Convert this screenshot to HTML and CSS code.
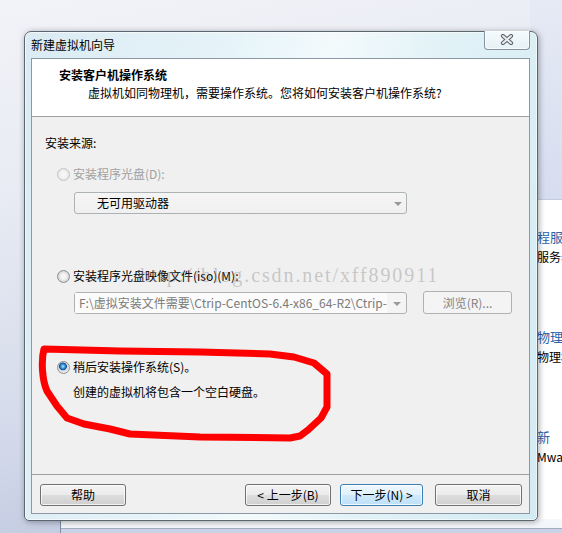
FILE: index.html
```html
<!DOCTYPE html>
<html>
<head>
<meta charset="utf-8">
<title>新建虚拟机向导</title>
<link rel="stylesheet" href="styles.css">
</head>
<body>
<div class="desktop">
  <div class="bgwin">
    <div class="bgwin-top"></div>
    <div class="bgwin-body">
      <div class="grp"><div class="bh">程服务器</div><div class="bt">服务器</div></div>
      <div class="grp"><div class="bh">物理机</div><div class="bt">物理机</div></div>
      <div class="grp"><div class="bh">新</div><div class="bt">Mware</div></div>
    </div>
  </div>
  <div class="bgwin2"></div>

  <div class="dialog">
    <div class="titlebar">
      <span class="title">新建虚拟机向导</span>
      <div class="close">
        <svg width="14" height="11" viewBox="0 0 14 11">
          <path d="M3 2 L11 9 M11 2 L3 9" stroke="#5d6670" stroke-width="4.2" stroke-linecap="round" fill="none"/>
          <path d="M3 2 L11 9 M11 2 L3 9" stroke="#e9ecef" stroke-width="2" stroke-linecap="round" fill="none"/>
        </svg>
      </div>
    </div>
    <div class="client">
      <div class="header">
        <div class="h-title">安装客户机操作系统</div>
        <div class="h-sub">虚拟机如同物理机，需要操作系统。您将如何安装客户机操作系统?</div>
      </div>
      <div class="body">
        <div class="section-label">安装来源:</div>
        <div class="option opt1 disabled"><span class="radio"></span><span>安装程序光盘(D):</span></div>
        <div class="combo"><span class="combo-text">无可用驱动器</span><span class="arrow"></span></div>
        <div class="option opt2"><span class="radio"></span><span>安装程序光盘映像文件(iso)(M):</span></div>
        <div class="row">
          <div class="combo edit"><span class="edit-text">F:\虚拟安装文件需要\Ctrip-CentOS-6.4-x86_64-R2\Ctrip-CentOS-6.4-x86_64-R2.iso</span><span class="arrow"></span></div>
          <div class="btn browse disabled">浏览(R)...</div>
        </div>
        <div class="option opt3"><span class="radio checked"></span><span>稍后安装操作系统(S)。</span></div>
        <div class="desc">创建的虚拟机将包含一个空白硬盘。</div>
      </div>
      <div class="footer">
        <div class="btn help">帮助</div>
        <div class="spacer"></div>
        <div class="btn back">&lt; 上一步(B)</div>
        <div class="btn next default">下一步(N) &gt;</div>
        <div class="btn cancel">取消</div>
      </div>
    </div>
  </div>

  <div class="watermark">http://blog.csdn.net/xff890911</div>

  <svg class="annotation" width="562" height="533" viewBox="0 0 562 533">
    <path d="M44 349 C41 360 42 380 47 391 L57 406 L67 418 L84 424 L110 429 L130 434 L200 437 L290 438 L300 436 L308 430 L321 418 L327 407 L327 374 L314 363 L294 357 L270 354 L200 352 L120 351 L44 349 Z"
      fill="none" stroke="#ff0000" stroke-width="7" stroke-linejoin="round"/>
  </svg>
</div>
</body>
</html>
```
FILE: styles.css
```css
* { box-sizing: border-box; }
html, body { margin: 0; padding: 0; }
body {
  width: 562px;
  height: 533px;
  overflow: hidden;
  font-family: "Noto Sans CJK SC", "Noto Sans", sans-serif;
  font-size: 12px;
  line-height: 16px;
  color: #000;
}
.desktop {
  position: relative;
  width: 562px;
  height: 533px;
  overflow: hidden;
  background: linear-gradient(168deg, #f2f3f8 0%, #e8ebf3 30%, #d5dbeb 65%, #b6c0dc 100%);
}

/* background window at the right */
.bgwin {
  position: absolute;
  left: 530px;
  top: 0;
  width: 40px;
  height: 521px;
  background: #fff;
  overflow: hidden;
}
.bgwin-top {
  height: 200px;
  background: linear-gradient(180deg, #e6eaf5 0%, #d6ddef 100%);
  border-bottom: 1px solid #c3cbe0;
}
.bgwin-body { padding: 27px 0 0 7px; white-space: nowrap; }
.grp { height: 100px; }
.bh { color: #2a62a8; font-size: 13px; line-height: 20px; }
.bt { color: #000; font-size: 12px; line-height: 20px; }

.bgwin2 {
  position: absolute;
  left: 60px;
  top: 519px;
  width: 502px;
  height: 14px;
  border-left: 1px solid #7f8da6;
  background: linear-gradient(180deg, #f6f8fb 0, #f3f6fa 9px, #a3acbc 9px, #a3acbc 10px, #c9d2e6 10px);
}

/* dialog window */
.dialog {
  position: absolute;
  left: 24px;
  top: 31px;
  width: 514px;
  height: 490px;
  border: 1px solid #5c6670;
  border-radius: 7px 7px 5px 5px;
  background: linear-gradient(100deg, #dbebf3 0%, #e6f4f9 35%, #f3fafc 52%, #e2f2f7 70%, #d3ebf3 100%);
  box-shadow: 1px 1px 6px rgba(0, 0, 0, 0.35), inset 0 0 0 1px rgba(255, 255, 255, 0.6);
  display: flex;
  flex-direction: column;
}
.titlebar {
  height: 26px;
  display: flex;
  align-items: flex-start;
}
.title {
  padding-left: 6px;
  line-height: 26px;
  color: #000;
}
.close {
  margin-left: auto;
  margin-right: 7px;
  margin-top: -1px;
  width: 46px;
  height: 19px;
  border: 1px solid #8594a3;
  border-top: none;
  border-radius: 0 0 4px 4px;
  background: linear-gradient(180deg, #f4fafc 0%, #e6f1f5 100%);
  display: flex;
  align-items: center;
  justify-content: center;
  box-shadow: inset 0 0 0 1px rgba(255, 255, 255, 0.7);
}
.close svg { display: block; margin-top: -1px; }

.client {
  margin: 0 7px 0 6px;
  height: 456px;
  border: 1px solid #8b98a5;
  background: #f0f0f0;
  display: flex;
  flex-direction: column;
}
.header {
  height: 58px;
  background: #fff;
  border-bottom: 1px solid #a0a0a0;
  padding: 8px 0 0 27px;
}
.h-title { font-weight: 700; }
.h-sub { margin-top: 2px; padding-left: 29px; }

.body {
  flex: 1;
  padding-top: 18px;
}
.section-label { margin-left: 13px; }
.option {
  display: flex;
  align-items: center;
  gap: 3px;
  height: 16px;
  margin-left: 25px;
}
.option.disabled { color: #a0a0a0; }
.opt1 { margin-top: 15px; }
.opt2 { margin-top: 54px; }
.opt3 { margin-top: 45px; }

.radio {
  width: 13px;
  height: 13px;
  flex: none;
  border-radius: 50%;
  border: 1px solid #8e8f8f;
  background: radial-gradient(circle at 50% 50%, #f6f6f6 0, #f4f4f4 2.5px, #d4d4d4 5.5px);
}
.disabled .radio {
  border-color: #c4c4c4;
  background: radial-gradient(circle at 50% 50%, #f7f7f7 0, #f4f4f4 3px, #e6e6e6 5.5px);
}
.radio.checked {
  background: radial-gradient(circle at 45% 40%, #b5e6ff 0, #3d95da 2px, #0e4f94 3.6px, #cfd7de 4.2px, #e8e8e8 5.5px);
}

.combo {
  margin-top: 10px;
  margin-left: 42px;
  width: 333px;
  height: 22px;
  border: 1px solid #adb2b5;
  border-radius: 3px;
  background: linear-gradient(180deg, #f5f5f5 0%, #f0f0f0 100%);
  display: flex;
  align-items: center;
  padding: 0 4px 0 22px;
}
.combo-text { flex: 1; }
.arrow {
  width: 0;
  height: 0;
  border-left: 4px solid transparent;
  border-right: 4px solid transparent;
  border-top: 4px solid #9a9a9a;
  margin-top: 1px;
}

.row {
  display: flex;
  align-items: flex-start;
  margin-top: 7px;
  margin-left: 42px;
}
.combo.edit {
  margin: 1px 0 0 0;
  padding: 0 4px 0 0;
  background: #f4f4f4;
}
.edit-text {
  width: 312px;
  height: 20px;
  line-height: 20px;
  padding-left: 4px;
  background: #fbfbfb;
  color: #7a7a7a;
  white-space: nowrap;
  overflow: hidden;
  margin-right: 6px;
}

.btn {
  height: 22px;
  border: 1px solid #707070;
  border-radius: 3px;
  background: linear-gradient(180deg, #f3f3f3 0%, #ebebeb 48%, #dddddd 52%, #cfcfcf 100%);
  box-shadow: inset 0 0 0 1px rgba(255, 255, 255, 0.75);
  display: flex;
  align-items: center;
  justify-content: center;
  color: #000;
  white-space: nowrap;
}
.btn.disabled {
  border-color: #adb2b5;
  background: #f4f4f4;
  box-shadow: none;
  color: #838383;
}
.btn.default {
  border-color: #3c7fb1;
  background: linear-gradient(180deg, #eef7fd 0%, #e1f1fc 48%, #cfe9fb 52%, #bde0f7 100%);
}
.browse {
  margin-left: 16px;
  width: 89px;
  height: 23px;
}

.desc {
  margin-top: 9px;
  margin-left: 41px;
}

.footer {
  height: 39px;
  border-top: 1px solid #a0a0a0;
  display: flex;
  align-items: flex-start;
  padding: 9px 7px 0 8px;
}
.spacer { flex: 1; }
.help { width: 86px; }
.back { width: 86px; }
.next { width: 83px; margin-left: 9px; }
.cancel { width: 87px; margin-left: 12px; }

.watermark {
  position: absolute;
  left: 140px;
  top: 264px;
  font-family: "Liberation Serif", "DejaVu Serif", serif;
  font-size: 20px;
  line-height: 22px;
  letter-spacing: 1.9px;
  color: rgba(140, 140, 140, 0.42);
  white-space: nowrap;
  pointer-events: none;
}
.annotation {
  position: absolute;
  left: 0;
  top: 0;
  pointer-events: none;
}
```
